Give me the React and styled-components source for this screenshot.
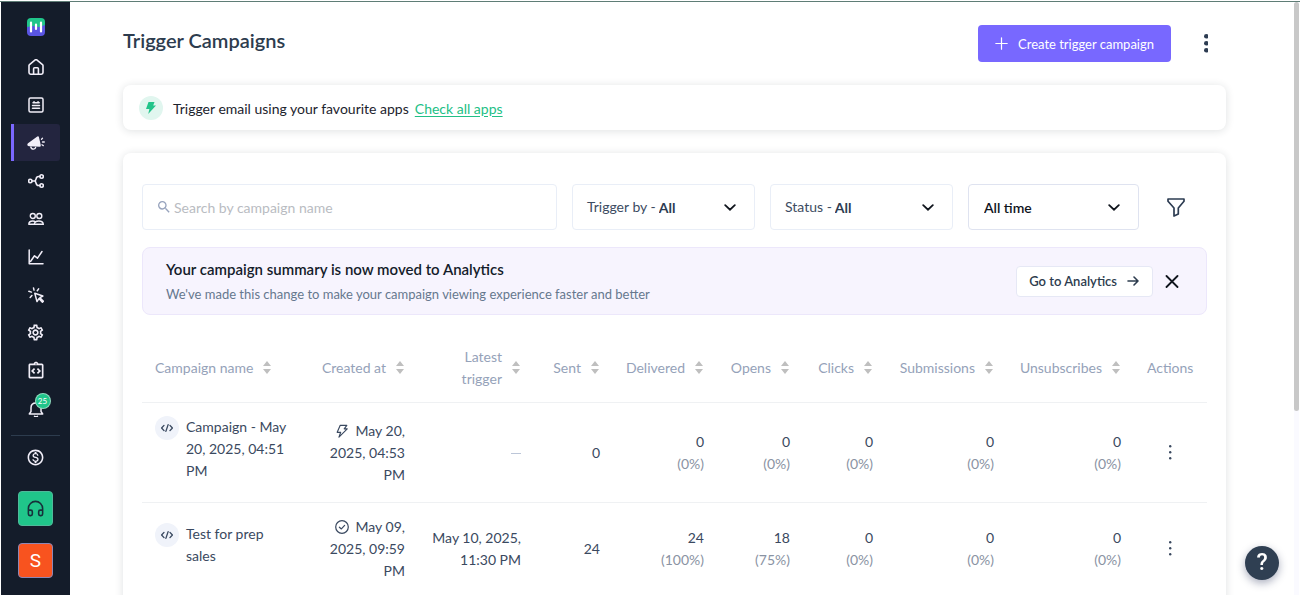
import React from "react";
import styled, { createGlobalStyle, css } from "styled-components";
import {
  MdOutlineIntegrationInstructions,
  MdOutlineMonetizationOn,
  MdOutlineSettings,
  MdSearch,
} from "react-icons/md";
import { Headphones } from "lucide-react";

const GlobalStyle = createGlobalStyle`
  *, *::before, *::after { box-sizing: border-box; }
  body { margin: 0; background: #fff; }
  body, button, input, select { font-family: Lato, "Open Sans", sans-serif; }
  button { border: 0; padding: 0; background: none; cursor: pointer; color: inherit; }
  svg { display: block; flex: none; }
`;

const Shell = styled.div`
  display: flex;
  height: 100vh;
  overflow: hidden;
  padding: 1px 0 1px 1px;
  border-top: 1px solid #fff;
  box-shadow: inset 0 1px 0 #5f7d76;
  color: #2d3c52;
  font-size: 14px;
  line-height: 22px;
`;

const Sidebar = styled.aside`
  display: flex;
  flex-direction: column;
  align-items: center;
  flex: none;
  width: 69px;
  padding-top: 16px;
  background: #141c2a;
  color: #f1eef8;
`;

const NavList = styled.nav`
  display: flex;
  flex-direction: column;
  gap: 1px;
  width: 49px;
  margin-top: 12px;
  padding-bottom: 8px;
  border-bottom: 1px solid #2d3c4e;
`;

const NavLink = styled.a`
  display: flex;
  align-items: center;
  justify-content: center;
  height: 37px;
  border-radius: 3px;
  color: inherit;
  ${(p) => p.$active && css`
    border-left: 3px solid #7b68ff;
    border-radius: 0 3px 3px 0;
    padding-right: 3px;
    background: #23253f;
  `}
`;

const BellBox = styled.span`
  position: relative;
`;

const Badge = styled.span`
  position: absolute;
  top: -7px;
  left: 8px;
  width: 14px;
  height: 14px;
  border-radius: 50%;
  background: #20c58a;
  box-shadow: 0 0 0 1px #8fdcc0;
  color: #fff;
  font-size: 8px;
  line-height: 14px;
  text-align: center;
`;

const BillingLink = styled(NavLink)`
  width: 49px;
  margin: 3px 0 15px;
`;

const SideTile = styled.button`
  display: flex;
  align-items: center;
  justify-content: center;
  flex: none;
  width: 35px;
  height: 35px;
  margin-bottom: 17px;
  border: 1px solid ${(p) => p.$edge};
  border-radius: 4px;
  background: ${(p) => p.$fill};
  color: ${(p) => p.$ink};
  font-family: Roboto, sans-serif;
  font-size: 19px;
`;

const Main = styled.main`
  flex: 1;
  min-width: 0;
  overflow: hidden;
  padding: 23px 68px 0 53px;
`;

const ScrollRail = styled.div`
  flex: none;
  width: 5px;
  margin-right: 1px;
  background: #fafaff;
`;

const ScrollThumb = styled.div`
  height: 69%;
  border-radius: 3px;
  background: #c8c8c8;
`;

const PageHeader = styled.header`
  display: flex;
  align-items: center;
  height: 37px;
  margin-bottom: 23px;
`;

const Title = styled.h1`
  flex: 1;
  margin: 0;
  padding-bottom: 7px;
  color: #2d3c4e;
  font-size: 20px;
  font-weight: 600;
  line-height: 28px;
`;

const CreateButton = styled.button`
  display: flex;
  align-items: center;
  gap: 10px;
  height: 37px;
  padding: 0 17px;
  border-radius: 4px;
  background: #7868ff;
  color: #fff;
  font-size: 13px;
`;

const KebabButton = styled.button`
  display: flex;
  justify-content: center;
  width: 40px;
  margin-left: 15px;
`;

const Card = styled.section`
  border-radius: 8px;
  background: #fff;
  box-shadow: 0 1px 8px rgba(30, 40, 50, 0.14);
`;

const InfoCard = styled(Card)`
  display: flex;
  align-items: center;
  height: 45px;
  padding: 2px 16px 0;
  margin-bottom: 23px;
  color: #1c232d;
`;

const BoltDisc = styled.span`
  display: flex;
  align-items: center;
  justify-content: center;
  width: 24px;
  height: 24px;
  margin: 0 10px 2px 0;
  border-radius: 50%;
  background: #e1f6ef;
`;

const AppsLink = styled.a`
  margin-left: 6px;
  color: #22bf85;
  text-underline-offset: 2px;
`;

const ListCard = styled(Card)`
  min-height: 700px;
  padding: 31px 19px;
`;

const Filters = styled.form`
  display: flex;
  align-items: center;
  gap: 15px;
  margin-bottom: 17px;
`;

const fieldFrame = css`
  display: flex;
  align-items: center;
  height: 46px;
  border: 1px solid ${(p) => p.$edge || "#e9eef7"};
  border-radius: 4px;
`;

const SearchBox = styled.label`
  ${fieldFrame}
  flex: 1;
  gap: 2px;
  padding-left: 13px;
  color: #97a3bd;
`;

const SearchInput = styled.input`
  flex: 1;
  min-width: 0;
  padding: 0;
  border: 0;
  outline: 0;
  background: none;
  color: #2d3c4e;
  font-size: 14px;
  &::placeholder { color: #b9bcc2; }
`;

const SelectBox = styled.label`
  ${fieldFrame}
  flex: none;
  width: ${(p) => p.$width};
  padding: 0 18px 0 14px;
  color: #3d4c62;
`;

const Select = styled.select`
  flex: 1;
  min-width: 0;
  padding: 0 0 0 ${(p) => (p.$prefixed ? "3px" : "1px")};
  border: 0;
  outline: 0;
  appearance: none;
  background: none;
  color: ${(p) => (p.$prefixed ? "#2d3c52" : "#10151d")};
  font-size: 14px;
  font-weight: ${(p) => (p.$prefixed ? 700 : 600)};
`;

const FilterButton = styled.button`
  display: flex;
  justify-content: center;
  width: 44px;
  margin-right: 9px;
`;

const Banner = styled.div`
  display: flex;
  align-items: center;
  height: 68px;
  margin-bottom: 18px;
  padding: 0 27px 0 23px;
  border: 1px solid #ece7fb;
  border-radius: 8px;
  background: #f7f4fe;
`;

const BannerText = styled.div`
  flex: 1;
  p {
    margin: 3px 0 0;
    color: #66788e;
    font-size: 13px;
  }
`;

const BannerTitle = styled.h2`
  margin: 0;
  color: #141c2a;
  font-size: 15px;
  font-weight: 600;
  line-height: 22px;
`;

const AnalyticsLink = styled.a`
  display: flex;
  align-items: center;
  gap: 10px;
  height: 31px;
  padding: 0 13px 0 12px;
  margin-right: 12px;
  border: 1px solid #e6e8f5;
  border-radius: 4px;
  background: #fff;
  color: #2d3c4e;
  font-size: 13px;
  font-weight: 600;
  text-decoration: none;
`;

const Table = styled.table`
  width: 100%;
  table-layout: fixed;
  border-collapse: collapse;
`;

const HeadCell = styled.th`
  height: 69px;
  padding: 1px 14px 0 13px;
  border-bottom: 1px solid #eff1f3;
  color: #95a2b9;
  font-weight: 400;
  text-align: right;
`;

const HeadInner = styled.button`
  display: flex;
  align-items: center;
  justify-content: ${(p) => (p.$start ? "flex-start" : "flex-end")};
  gap: 10px;
  width: 100%;
  font-size: 14px;
  line-height: 22px;
  text-align: right;
  white-space: ${(p) => (p.$wrap ? "normal" : "nowrap")};
`;

const Row = styled.tr`
  & + & td { border-top: 1px solid #eff1f3; }
`;

const Cell = styled.td`
  padding: 13px 13px 12px;
  color: #3a4960;
  text-align: right;
  vertical-align: middle;
`;

const ActionCell = styled(Cell)`
  padding-left: 0;
  padding-right: 0;
`;

const CampaignName = styled.div`
  display: flex;
  gap: 7px;
  margin-bottom: 8px;
  text-align: left;
`;

const CodeDisc = styled.span`
  display: flex;
  align-items: center;
  justify-content: center;
  flex: none;
  width: 24px;
  height: 24px;
  border-radius: 50%;
  background: #f0f3fa;
`;

const InlineIcon = styled.span`
  display: inline-block;
  margin-right: 7px;
  vertical-align: -2px;
`;

const Percent = styled.div`
  color: #8a93a3;
`;

const RowMenu = styled.button`
  display: flex;
  justify-content: center;
  width: 100%;
`;

const HelpButton = styled.button`
  position: fixed;
  right: 21px;
  bottom: 16px;
  width: 34px;
  height: 34px;
  border-radius: 50%;
  background: #2f3f52;
  box-shadow: 0 3px 8px rgba(40, 50, 90, 0.4);
  color: #fff;
  font-family: Roboto, sans-serif;
  font-size: 23px;
  font-weight: 500;
  line-height: 34px;
`;

const Line = ({ size = 16, width = 1.5, children, ...rest }) => (
  <svg width={size} height={size} viewBox="0 0 16 16" fill="none" stroke="currentColor"
    strokeWidth={width} strokeLinecap="round" strokeLinejoin="round" aria-hidden="true" {...rest}>
    {children}
  </svg>
);

const Logo = () => (
  <svg width="18" height="18" viewBox="0 0 18 18" role="img" aria-label="Home">
    <path d="M4 0h10a4 4 0 0 1 4 4v6H0V4a4 4 0 0 1 4-4z" fill="#20c58a" />
    <path d="M0 9l6-1 6 1 6-2v7a4 4 0 0 1-4 4H4a4 4 0 0 1-4-4z" fill="#5a55e3" />
    <path d="M4 4.500v9M9 6.500v4.500M14 4.500v9" stroke="#fff" strokeWidth="2.200" strokeLinecap="round" />
  </svg>
);

const HomeIcon = () => (
  <Line width={1.6}>
    <path d="M1 6.600q0-.6.5-1L7.200.9q.8-.6 1.600 0l5.700 4.700q.5.4.5 1v7q0 1.600-1.600 1.600H2.600Q1 15.200 1 13.600z" />
    <path d="M5.600 15V9.800q0-1 1-1h2.800q1 0 1 1V15" />
  </Line>
);

const ListIcon = () => (
  <Line>
    <rect x="1" y="1" width="14" height="14" rx="1.500" />
    <path d="M4.500 8.500h7M4.500 11.300h7M5 5.800h6.200M6 4.700h.1M10 4.700h.1" />
  </Line>
);

const MegaphoneIcon = () => (
  <svg width="18" height="16" viewBox="0 0 18 16" fill="currentColor" aria-hidden="true">
    <path d="M1 8.200 10.300 1.500q1.200-.7 1.600.5l1.900 8.300q.2 1.500-1.200 1.500L2 11.300Q.3 10.700.3 9.700.300 8.700 1 8.200z" />
    <path d="M3.600 11.500q.7 2.700 3 2.700 1.800-.2 2.200-2.400" fill="none" stroke="currentColor" strokeWidth="1.300" />
    <path d="m14.500 4.200 1-.9M15.500 7h1.800M15 9.800l1.300.8" stroke="currentColor" strokeWidth="1.300" strokeLinecap="round" />
  </svg>
);

const FlowIcon = () => (
  <Line width={1.6}>
    <circle cx="2.300" cy="8" r="1.700" /><circle cx="13.600" cy="3.500" r="1.700" /><circle cx="13.600" cy="12.500" r="1.700" />
    <path d="M4 8h3M11.900 3.500h-1.400Q8.500 3.500 8 6L7.200 8l.8 2q.5 2.500 2.500 2.500h1.400" />
  </Line>
);

const PeopleIcon = () => (
  <Line width={1.4}>
    <circle cx="4.800" cy="5" r="2.500" /><circle cx="11.300" cy="5" r="2.500" />
    <path d="M.8 13.300q0-3.300 4-3.300 1.600 0 2.600.8M.8 13.300h4.400M6.200 13.300q.3-3.300 4.600-3.300t4.500 3.300z" />
  </Line>
);

const ChartIcon = () => (
  <Line>
    <path d="M1.200 1v13.700H15M2.500 12.500l4-5.700 3 2.400L14 2.500" />
  </Line>
);

const ClickIcon = () => (
  <Line>
    <path d="M6.800 6.300 9 14.600l1.900-3 3.500 3.600 1-1-3.500-3.500 3-1.700z" />
    <path d="M5.500.9l.5 2.200M10.600 1.900 9.300 3.700M.9 4.300l2.500.8M2.200 10.500l1.700-2" />
  </Line>
);

const BellIcon = () => (
  <Line>
    <path d="M1.300 13h13.400L13 10.500V6.800Q13 2 8 2T3 6.800v3.700zM6.500 15.300q1.500.8 3 0" />
  </Line>
);

const Dots = ({ r, gap }) => {
  const mid = gap + r;
  return (
    <svg width={r * 2} height={mid * 2} fill="currentColor" aria-hidden="true">
      <circle cx={r} cy={r} r={r} /><circle cx={r} cy={mid} r={r} /><circle cx={r} cy={mid + gap} r={r} />
    </svg>
  );
};

const Chevron = () => (
  <svg width="12" height="7" viewBox="0 0 12 7" fill="none" stroke="#10151d" strokeWidth="1.800" strokeLinecap="round" aria-hidden="true">
    <path d="m1.200 1.200 4.800 4.500 4.800-4.500" />
  </svg>
);

const SortIcon = () => (
  <svg width="8" height="13" viewBox="0 0 8 13" fill="#bfbfbf" aria-hidden="true">
    <path d="M4 0 8 5H0zM4 13 8 8H0z" />
  </svg>
);

const CodeIcon = () => (
  <Line size={12} width={1.8}>
    <path d="M4 4.500.8 8 4 11.500M12 4.500 15.200 8 12 11.500M9.500 3.500l-3 9" />
  </Line>
);

const BoltIcon = () => (
  <Line size={14} width={1.3}>
    <path d="M6 1.500h7.500l-3 4h3.500L4.500 15l2-5.500H2.500z" />
  </Line>
);

const CheckIcon = () => (
  <Line size={14} width={1.4}>
    <circle cx="8" cy="8" r="7.200" /><path d="m5 8.200 2.300 2 3.700-4" />
  </Line>
);

const NAV = [
  ["Home", <HomeIcon />],
  ["Templates", <ListIcon />],
  ["Campaigns", <MegaphoneIcon />],
  ["Automation", <FlowIcon />],
  ["Contacts", <PeopleIcon />],
  ["Analytics", <ChartIcon />],
  ["Engagement", <ClickIcon />],
  ["Settings", <MdOutlineSettings size={19} />],
  ["Developers", <MdOutlineIntegrationInstructions size={20} />],
  ["Notifications", <BellBox><BellIcon /><Badge>25</Badge></BellBox>],
];

const COLUMNS = [
  ["Campaign name", 167], ["Created at", 109], ["Latest trigger", 116], ["Sent", 79],
  ["Delivered", 104], ["Opens", 86], ["Clicks", 83], ["Submissions", 121],
  ["Unsubscribes", 127], ["Actions", 73],
];

const ROWS = [
  {
    name: "Campaign - May 20, 2025, 04:51 PM", icon: <BoltIcon />, created: "May 20, 2025, 04:53 PM",
    latest: null, sent: 0, stats: [[0, 0], [0, 0], [0, 0], [0, 0], [0, 0]],
  },
  {
    name: "Test for prep sales", icon: <CheckIcon />, created: "May 09, 2025, 09:59 PM",
    latest: "May 10, 2025, 11:30 PM", sent: 24, stats: [[24, 100], [18, 75], [0, 0], [0, 0], [0, 0]],
  },
];

const Dash = styled.span`
  display: inline-block;
  width: 10px;
  height: 1px;
  background: #bcc6d8;
  vertical-align: 4px;
`;

export default function App() {
  return (
    <>
      <GlobalStyle />
      <Shell>
        <Sidebar>
          <Logo />
          <NavList aria-label="Main">
            {NAV.map(([label, icon]) => (
              <NavLink key={label} href="#" aria-label={label} $active={label === "Campaigns"}>{icon}</NavLink>
            ))}
          </NavList>
          <BillingLink href="#" aria-label="Billing"><MdOutlineMonetizationOn size={19} /></BillingLink>
          <SideTile aria-label="Support" $fill="#20c58a" $edge="#4fb99a" $ink="#17303a">
            <Headphones size={19} strokeWidth={2} />
          </SideTile>
          <SideTile aria-label="Account" $fill="#f8531f" $edge="#8d86b5" $ink="#fff">S</SideTile>
        </Sidebar>
        <Main>
          <PageHeader>
            <Title>Trigger Campaigns</Title>
            <CreateButton>
              <Line size={13} width={1.5}><path d="M8 1v14M1 8h14" /></Line>
              Create trigger campaign
            </CreateButton>
            <KebabButton aria-label="More options"><Dots r={2.3} gap={7} /></KebabButton>
          </PageHeader>

          <InfoCard>
            <BoltDisc>
              <svg width="10" height="12" viewBox="0 0 10 12" fill="#22c48a" aria-hidden="true">
                <path d="M2.500 0h6L7.200 3.500H10L2.200 12l1.200-5H0z" />
              </svg>
            </BoltDisc>
            Trigger email using your favourite apps
            <AppsLink href="#">Check all apps</AppsLink>
          </InfoCard>

          <ListCard>
            <Filters onSubmit={(e) => e.preventDefault()}>
              <SearchBox>
                <MdSearch size={16} aria-hidden="true" />
                <SearchInput aria-label="Search by campaign name" placeholder="Search by campaign name" />
              </SearchBox>
              <SelectBox $width="183px">
                Trigger by -
                <Select $prefixed><option>All</option></Select>
                <Chevron />
              </SelectBox>
              <SelectBox $width="183px">
                Status -
                <Select $prefixed><option>All</option></Select>
                <Chevron />
              </SelectBox>
              <SelectBox $width="171px" $edge="#dfe3f0">
                <Select aria-label="Period"><option>All time</option></Select>
                <Chevron />
              </SelectBox>
              <FilterButton aria-label="More filters">
                <svg width="18" height="19" viewBox="0 0 18 19" fill="none" stroke="#2d3c52" strokeWidth="1.700" strokeLinejoin="round">
                  <path d="M1 1h16v2.300L11.300 10v6L7 18V10L1 3.300z" />
                </svg>
              </FilterButton>
            </Filters>

            <Banner>
              <BannerText>
                <BannerTitle>Your campaign summary is now moved to Analytics</BannerTitle>
                <p>We've made this change to make your campaign viewing experience faster and better</p>
              </BannerText>
              <AnalyticsLink href="#">
                Go to Analytics
                <svg width="12" height="10" viewBox="0 0 12 10" fill="none" stroke="currentColor" strokeWidth="1.600" strokeLinecap="round" strokeLinejoin="round" aria-hidden="true">
                  <path d="M1 5h10M7 1l4 4-4 4" />
                </svg>
              </AnalyticsLink>
              <button aria-label="Dismiss">
                <svg width="14" height="13" viewBox="0 0 14 13" stroke="#10151d" strokeWidth="1.800" strokeLinecap="round">
                  <path d="m1.500 1 11 11m0-11-11 11" />
                </svg>
              </button>
            </Banner>

            <Table>
              <colgroup>
                {COLUMNS.map(([label, width]) => <col key={label} width={width} />)}
              </colgroup>
              <thead>
                <tr>
                  {COLUMNS.map(([label], i) => (
                    <HeadCell key={label} scope="col">
                      {label === "Actions" ? label : (
                        <HeadInner $start={i === 0} $wrap={label === "Latest trigger"}>
                          {label}<SortIcon />
                        </HeadInner>
                      )}
                    </HeadCell>
                  ))}
                </tr>
              </thead>
              <tbody>
                {ROWS.map((row) => (
                  <Row key={row.name}>
                    <Cell>
                      <CampaignName><CodeDisc><CodeIcon /></CodeDisc>{row.name}</CampaignName>
                    </Cell>
                    <Cell><InlineIcon>{row.icon}</InlineIcon>{row.created}</Cell>
                    <Cell>{row.latest || <Dash role="img" aria-label="None" />}</Cell>
                    <Cell>{row.sent}</Cell>
                    {row.stats.map(([count, percent], i) => (
                      <Cell key={i}>{count}<Percent>({percent}%)</Percent></Cell>
                    ))}
                    <ActionCell>
                      <RowMenu aria-label={`Actions for ${row.name}`}><Dots r={1.2} gap={6} /></RowMenu>
                    </ActionCell>
                  </Row>
                ))}
              </tbody>
            </Table>
          </ListCard>
        </Main>
        <ScrollRail><ScrollThumb /></ScrollRail>
        <HelpButton aria-label="Help">?</HelpButton>
      </Shell>
    </>
  );
}
